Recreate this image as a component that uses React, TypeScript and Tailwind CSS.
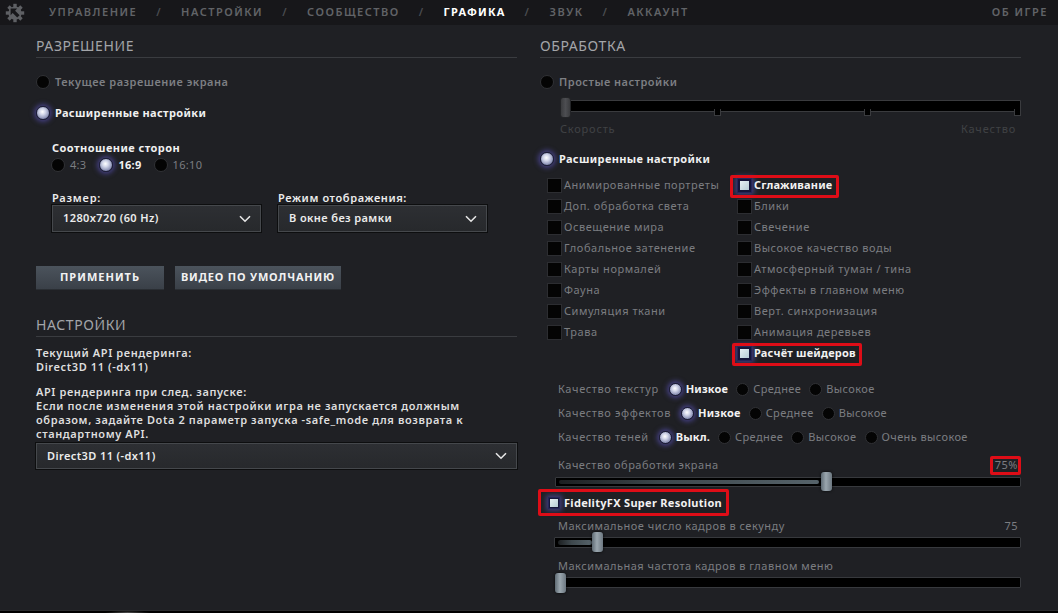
import React from "react";

const FONT = "font-['Noto_Sans',sans-serif]";

function Gear() {
  const teeth = [0, 45, 90, 135, 180, 225, 270, 315];
  return (
    <svg width="20" height="20" viewBox="0 0 20 20" className="shrink-0">
      <g fill="#5e6064">
        <circle cx="10" cy="10" r="6.6" />
        {teeth.map((a) => (
          <rect key={a} x="8.3" y="0.8" width="3.4" height="4.5" transform={`rotate(${a} 10 10)`} />
        ))}
      </g>
      <path d="M5.6 5.6 H12.2 L10.1 7.7 L14.6 12.2 L12.2 14.6 L7.7 10.1 L5.6 12.2 Z" fill="#17171a" />
    </svg>
  );
}

function Radio({ on, size = 13 }: { on?: boolean; size?: number }) {
  const sz = size === 14 ? "w-[14px] h-[14px]" : size === 12 ? "w-[12px] h-[12px]" : "w-[13px] h-[13px]";
  return on ? (
    <span
      className={`block ${sz} rounded-full shrink-0 border border-[#1d1e3c] bg-[radial-gradient(circle_at_45%_40%,#ffffff_0%,#d3d7ea_30%,#8a90b4_70%,#2c2f50_100%)] shadow-[0_0_5px_2px_rgba(105,95,225,0.5)]`}
    />
  ) : (
    <span className={`block ${sz} rounded-full shrink-0 bg-[#040404] border border-[#303135]`} />
  );
}

function Opt({ on, label }: { on?: boolean; label: string }) {
  return (
    <div className="flex items-center h-[14px] gap-[5px]">
      <Radio on={on} size={14} />
      <span
        className={`text-[11px] leading-[14px] ${
          on ? "text-[#f0f0f0] font-bold tracking-[0.35px]" : "text-[#7d7f83] font-semibold tracking-[0.5px]"
        }`}
      >
        {label}
      </span>
    </div>
  );
}

function Heading({ children, className = "" }: { children: React.ReactNode; className?: string }) {
  return (
    <div
      className={`text-[14px] leading-[18px] tracking-[0.6px] text-[#a3a5a9] pb-[2px] border-b border-[#3a3c40] ${className}`}
    >
      {children}
    </div>
  );
}

function Chevron() {
  return (
    <svg width="12" height="8" viewBox="0 0 12 8" className="shrink-0">
      <path d="M1 1.2 L6 6.2 L11 1.2" fill="none" stroke="#e6e6e6" strokeWidth="1.6" />
    </svg>
  );
}

function Dropdown({ value, className = "" }: { value: string; className?: string }) {
  return (
    <div
      className={`flex items-center justify-between pl-[10px] pr-[9px] border border-[#45484c] bg-[linear-gradient(#2d2f33,#27292c)] shadow-[0_0_0_1px_#0d0e0f] ${className}`}
    >
      <span className="text-[11px] font-semibold tracking-[0.4px] text-[#ececec]">{value}</span>
      <Chevron />
    </div>
  );
}

function Check({ on, label }: { on?: boolean; label: string }) {
  return (
    <div className="flex items-center h-[21px] gap-[2px]">
      {on ? (
        <span className="w-[15px] h-[15px] shrink-0 flex items-center justify-center bg-[#15163a] border border-[#25265a] shadow-[0_0_5px_2px_rgba(105,95,225,0.45)]">
          <span className="w-[9px] h-[9px] bg-[linear-gradient(135deg,#e6f0f4,#b6ccd6)]" />
        </span>
      ) : (
        <span className="w-[15px] h-[15px] shrink-0 bg-[#040404] border border-[#2c2d31]" />
      )}
      <span
        className={`text-[11px] whitespace-nowrap ${
          on ? "text-[#f2f2f2] font-bold tracking-[0.2px]" : "text-[#7b7d81] tracking-[0.55px]"
        }`}
      >
        {label}
      </span>
    </div>
  );
}

function QOpt({ on, label }: { on?: boolean; label: string }) {
  return (
    <div className="flex items-center gap-[4px]">
      <Radio on={on} size={13} />
      <span className={`text-[11px] ${on ? "text-[#f2f2f2] font-bold tracking-[0.2px]" : "text-[#7b7d81] tracking-[0.4px]"}`}>
        {label}
      </span>
    </div>
  );
}

function QRow({ label, opts }: { label: string; opts: string[] }) {
  return (
    <div className="flex items-center h-[24px] ml-[18px]">
      <span className="text-[11px] tracking-[0.6px] text-[#7b7d81] mr-[10px]">{label}</span>
      <div className="flex items-center gap-[8px]">
        {opts.map((o, i) => (
          <QOpt key={o} on={i === 0} label={o} />
        ))}
      </div>
    </div>
  );
}

function RedBox({ className }: { className: string }) {
  return <span className={`absolute border-[3px] border-[#de0d17] rounded-[2px] pointer-events-none ${className}`} />;
}

function Thumb({ left, h }: { left: number; h: string }) {
  return (
    <span
      className={`absolute top-0 w-[11px] ${h} rounded-[3px] bg-[linear-gradient(90deg,#5f6b74,#9aa6ae_45%,#6c7780)] shadow-[0_0_3px_rgba(0,0,0,0.8)]`}
      style={{ left }}
    />
  );
}

function Track({ fill, top, h }: { fill: number; top: string; h: string }) {
  return (
    <div className={`relative ${top} ${h} bg-black border border-[#37393d] rounded-[1px]`}>
      {fill > 0 && (
        <span
          className="absolute left-[3px] top-[2px] bottom-[2px] rounded-full bg-[linear-gradient(90deg,#1c1f21,#3e484d_40%,#56636a)]"
          style={{ width: fill }}
        />
      )}
    </div>
  );
}

export default function App() {
  return (
    <div className={`w-[1058px] h-[613px] overflow-hidden flex flex-col bg-[#1f2024] ${FONT}`}>
      {/* Top nav */}
      <div className="h-[25px] shrink-0 bg-[#17171a] flex items-center pl-[5px] pr-[10px]">
        <Gear />
        <div className="ml-[24px] flex items-center gap-[19px] text-[11px] font-semibold tracking-[1.5px] text-[#616367]">
          <span>УПРАВЛЕНИЕ</span>
          <span className="text-[#4a4c50]">/</span>
          <span>НАСТРОЙКИ</span>
          <span className="text-[#4a4c50]">/</span>
          <span>СООБЩЕСТВО</span>
          <span className="text-[#4a4c50]">/</span>
          <span className="text-white font-bold tracking-[1.2px]">ГРАФИКА</span>
          <span className="text-[#4a4c50]">/</span>
          <span>ЗВУК</span>
          <span className="text-[#4a4c50]">/</span>
          <span>АККАУНТ</span>
        </div>
        <span className="ml-auto text-[11px] font-semibold tracking-[1.5px] text-[#616367]">ОБ ИГРЕ</span>
      </div>

      {/* Body */}
      <div className="flex-1 grid grid-cols-[481px_481px] gap-x-[23px] pl-[36px] pt-[12px]">
        {/* Left column */}
        <div className="flex flex-col">
          <Heading>РАЗРЕШЕНИЕ</Heading>
          <div className="mt-[17px]">
            <Opt label="Текущее разрешение экрана" />
          </div>
          <div className="mt-[17px]">
            <Opt on label="Расширенные настройки" />
          </div>
          <div className="mt-[21px] ml-[16px] h-[14px] leading-[14px] text-[11px] font-bold tracking-[0.45px] text-[#f0f0f0]">
            Соотношение сторон
          </div>
          <div className="mt-[3px] ml-[15px] h-[14px] flex items-center">
            <Radio size={14} />
            <span className="ml-[5px] text-[11px] tracking-[0.3px] text-[#7b7d81]">4:3</span>
            <span className="ml-[13px]">
              <Radio on size={14} />
            </span>
            <span className="ml-[5px] text-[11px] font-bold tracking-[0.3px] text-[#f2f2f2]">16:9</span>
            <span className="ml-[12px]">
              <Radio size={14} />
            </span>
            <span className="ml-[5px] text-[11px] tracking-[0.3px] text-[#7b7d81]">16:10</span>
          </div>
          <div className="mt-[19px] ml-[16px] flex gap-[17px]">
            <div className="w-[209px] flex flex-col">
              <span className="h-[14px] leading-[14px] text-[11px] font-semibold tracking-[0.8px] text-[#ececec]">Размер:</span>
              <Dropdown value="1280x720 (60 Hz)" className="h-[27px]" />
            </div>
            <div className="w-[209px] flex flex-col">
              <span className="h-[14px] leading-[14px] text-[11px] font-semibold tracking-[0.6px] text-[#ececec]">
                Режим отображения:
              </span>
              <Dropdown value="В окне без рамки" className="h-[27px]" />
            </div>
          </div>
          <div className="mt-[34px] flex gap-[11px]">
            <button className="w-[128px] h-[24px] bg-[linear-gradient(#4b535c,#3a4048)] border-b border-[#2a2e33] text-[11px] font-bold tracking-[1px] text-[#f2f2f2]">
              ПРИМЕНИТЬ
            </button>
            <button className="w-[166px] h-[24px] bg-[linear-gradient(#4b535c,#3a4048)] border-b border-[#2a2e33] text-[11px] font-bold tracking-[0.8px] text-[#f2f2f2]">
              ВИДЕО ПО УМОЛЧАНИЮ
            </button>
          </div>
          <Heading className="mt-[26px]">НАСТРОЙКИ</Heading>
          <div className="mt-[9px] text-[11px] leading-[14px] font-semibold tracking-[0.6px] text-[#dedede]">
            <div>Текущий API рендеринга:</div>
            <div>Direct3D 11 (-dx11)</div>
            <div className="mt-[11px]">API рендеринга при след. запуске:</div>
            <div>
              Если после изменения этой настройки игра не запускается должным
              <br />
              образом, задайте Dota 2 параметр запуска -safe_mode для возврата к
              <br />
              стандартному API.
            </div>
          </div>
          <Dropdown value="Direct3D 11 (-dx11)" className="mt-[2px] h-[26px]" />
        </div>

        {/* Right column */}
        <div className="flex flex-col">
          <Heading>ОБРАБОТКА</Heading>
          <div className="mt-[17px]">
            <Opt label="Простые настройки" />
          </div>
          {/* simple slider */}
          <div className="mt-[8px] ml-[20px] w-[461px] h-[21px] relative">
            <div className="relative mt-[3px] h-[12px] bg-black border border-[#3a3b3e] rounded-br-[3px]">
              {[153, 303, 453].map((x) => (
                <span
                  key={x}
                  className="absolute top-[8px] w-[7px] h-[7px] bg-black border border-[#3a3b3e] border-t-0"
                  style={{ left: x }}
                />
              ))}
            </div>
            <span className="absolute left-0 top-0 w-[11px] h-[21px] rounded-[3px] bg-[linear-gradient(90deg,#3a3b3e,#4d4e52,#3a3b3e)] border border-[#232427]" />
          </div>
          <div className="mt-[4px] ml-[20px] w-[456px] h-[14px] leading-[14px] flex justify-between text-[11px] tracking-[0.8px] text-[#404245]">
            <span>Скорость</span>
            <span>Качество</span>
          </div>
          <div className="mt-[16px]">
            <Opt on label="Расширенные настройки" />
          </div>
          {/* check grid */}
          <div className="mt-[9px] ml-[7px] flex">
            <div className="w-[190px] flex flex-col">
              <Check label="Анимированные портреты" />
              <Check label="Доп. обработка света" />
              <Check label="Освещение мира" />
              <Check label="Глобальное затенение" />
              <Check label="Карты нормалей" />
              <Check label="Фауна" />
              <Check label="Симуляция ткани" />
              <Check label="Трава" />
            </div>
            <div className="flex flex-col">
              <div className="relative">
                <Check on label="Сглаживание" />
                <RedBox className="left-[-7px] top-0 w-[109px] h-[23px]" />
              </div>
              <Check label="Блики" />
              <Check label="Свечение" />
              <Check label="Высокое качество воды" />
              <Check label="Атмосферный туман / тина" />
              <Check label="Эффекты в главном меню" />
              <Check label="Верт. синхронизация" />
              <Check label="Анимация деревьев" />
              <div className="relative">
                <Check on label="Расчёт шейдеров" />
                <RedBox className="left-[-5px] top-0 w-[130px] h-[23px]" />
              </div>
            </div>
          </div>
          {/* quality rows */}
          <div className="mt-[13px] flex flex-col">
            <QRow label="Качество текстур" opts={["Низкое", "Среднее", "Высокое"]} />
            <QRow label="Качество эффектов" opts={["Низкое", "Среднее", "Высокое"]} />
            <QRow label="Качество теней" opts={["Выкл.", "Среднее", "Высокое", "Очень высокое"]} />
          </div>
          {/* screen quality */}
          <div className="mt-[9px] ml-[18px] w-[460px] h-[14px] leading-[14px] flex justify-between text-[11px] tracking-[0.5px] text-[#7b7d81]">
            <span>Качество обработки экрана</span>
            <span className="relative">
              75%
              <RedBox className="left-[-5px] top-[-2px] w-[31px] h-[19px]" />
            </span>
          </div>
          <div className="ml-[15px] w-[466px] h-[19px] relative">
            <Track fill={260} top="mt-[5px]" h="h-[10px]" />
            <Thumb left={266} h="h-[19px]" />
          </div>
          {/* FSR */}
          <div className="mt-[2px] ml-[8px] h-[20px] relative flex items-center gap-[4px] w-fit">
            <span className="w-[12px] h-[12px] shrink-0 flex items-center justify-center bg-[#15163a] border border-[#25265a] shadow-[0_0_5px_2px_rgba(105,95,225,0.45)]">
              <span className="w-[8px] h-[8px] bg-[linear-gradient(135deg,#e6f0f4,#b6ccd6)]" />
            </span>
            <span className="text-[11px] font-bold tracking-[0.3px] text-[#f2f2f2] whitespace-nowrap">
              FidelityFX Super Resolution
            </span>
            <RedBox className="left-[-10px] top-[-4px] w-[191px] h-[27px]" />
          </div>
          <div className="mt-[6px] ml-[18px] w-[460px] h-[14px] leading-[14px] flex justify-between text-[11px] tracking-[0.5px] text-[#7b7d81]">
            <span>Максимальное число кадров в секунду</span>
            <span>75</span>
          </div>
          <div className="mt-[-1px] ml-[14px] w-[467px] h-[20px] relative">
            <Track fill={34} top="mt-[5px]" h="h-[11px]" />
            <Thumb left={38} h="h-[20px]" />
          </div>
          <div className="mt-[7px] ml-[18px] h-[14px] leading-[14px] text-[11px] tracking-[0.5px] text-[#7b7d81]">
            Максимальная частота кадров в главном меню
          </div>
          <div className="ml-[15px] w-[466px] h-[20px] relative">
            <Track fill={0} top="mt-[4px]" h="h-[11px]" />
            <Thumb left={0} h="h-[20px]" />
          </div>
        </div>
      </div>

      {/* bottom strip */}
      <div className="h-[3px] shrink-0 bg-black border-t border-[#2a2b2e] relative">
        <span className="absolute left-[105px] top-0 w-[45px] h-[3px] bg-[radial-gradient(ellipse,#4a4a4a,transparent_70%)]" />
      </div>
    </div>
  );
}
